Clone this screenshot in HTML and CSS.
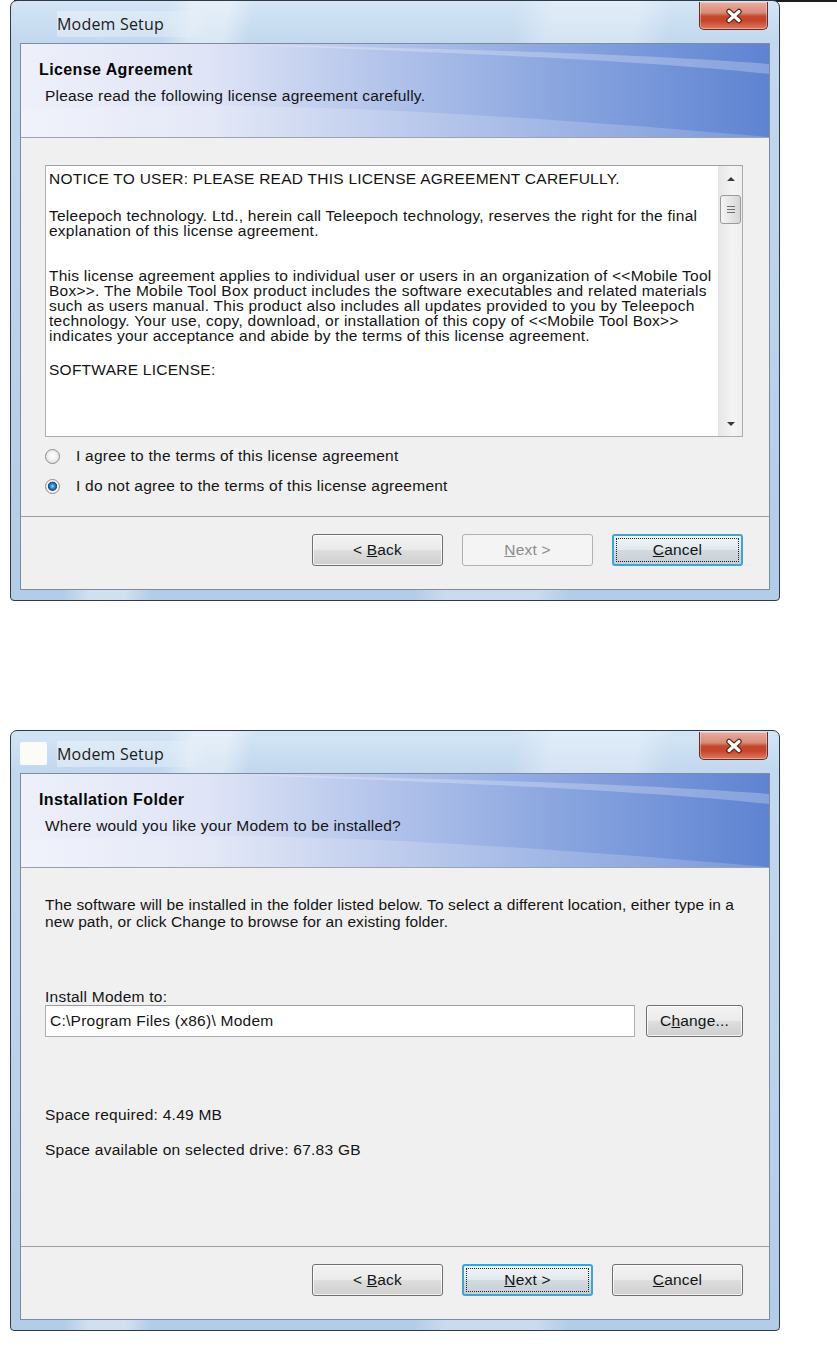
FILE: index.html
```html
<!DOCTYPE html>
<html lang="en">
<head>
  <meta charset="UTF-8" />
  <meta name="viewport" content="width=device-width, initial-scale=1" />
  <title>Modem Setup</title>
  <link rel="stylesheet" href="styles.css">
</head>
<body>
  <div class="rule"></div>

  <!-- step 1: license -->
  <div class="window">
    <div class="titlebar">
      <span class="title">Modem Setup</span>
      <span class="close">
        <svg width="20" height="16" viewBox="0 0 20 16">
          <path d="M5 3.5 L15 12.5 M15 3.5 L5 12.5" stroke="#5a2015" stroke-width="5.5" stroke-linecap="round" fill="none"/>
          <path d="M5 3.5 L15 12.5 M15 3.5 L5 12.5" stroke="#ffffff" stroke-width="3.2" stroke-linecap="round" fill="none"/>
        </svg>
      </span>
    </div>
    <div class="client">
      <div class="banner">
        <svg class="banner-bg" viewBox="0 0 750 93" preserveAspectRatio="none">
          <defs>
            <linearGradient id="bannerA" x1="0" y1="0" x2="1" y2="0">
              <stop offset="0" stop-color="#eef0fa"/>
              <stop offset="0.25" stop-color="#dfe4f6"/>
              <stop offset="0.45" stop-color="#b9c8ec"/>
              <stop offset="0.7" stop-color="#8da8e0"/>
              <stop offset="1" stop-color="#5e83d2"/>
            </linearGradient>
          </defs>
          <rect width="750" height="93" fill="url(#bannerA)"/>
          <path d="M200 0 C420 4 620 10 750 20 L750 30 C620 16 420 8 200 0 Z" fill="#ffffff" fill-opacity="0.25"/>
          <path d="M0 66 C220 54 460 68 750 93 L0 93 Z" fill="#ffffff" fill-opacity="0.18"/>
        </svg>
        <div class="banner-text">
          <h1>License Agreement</h1>
          <p>Please read the following license agreement carefully.</p>
        </div>
      </div>

      <div class="body license-body">
        <div class="licbox">
          <div class="lictext">
            <p>NOTICE TO USER: PLEASE READ THIS LICENSE AGREEMENT CAREFULLY.</p>
            <p>Teleepoch technology. Ltd., herein call Teleepoch technology, reserves the right for the final<br>explanation of this license agreement.</p>
            <p>This license agreement applies to individual user or users in an organization of &lt;&lt;Mobile Tool<br>Box&gt;&gt;. The Mobile Tool Box product includes the software executables and related materials<br>such as users manual. This product also includes all updates provided to you by Teleepoch<br>technology. Your use, copy, download, or installation of this copy of &lt;&lt;Mobile Tool Box&gt;&gt;<br>indicates your acceptance and abide by the terms of this license agreement.</p>
            <p>SOFTWARE LICENSE:</p>
          </div>
          <div class="scrollbar">
            <span class="sb-btn"><span class="arrow up"></span></span>
            <span class="sb-thumb"><span class="grip"></span></span>
            <span class="sb-track"></span>
            <span class="sb-btn"><span class="arrow down"></span></span>
          </div>
        </div>
        <div class="radio-row"><span class="radio"></span><span>I agree to the terms of this license agreement</span></div>
        <div class="radio-row"><span class="radio checked"></span><span>I do not agree to the terms of this license agreement</span></div>
      </div>

      <div class="footer">
        <span class="btn"><span>&lt; <u>B</u>ack</span></span>
        <span class="btn disabled"><span><u>N</u>ext &gt;</span></span>
        <span class="btn focus"><span class="focus-ring"><span><u>C</u>ancel</span></span></span>
      </div>
    </div>
  </div>

  <!-- step 2: folder -->
  <div class="window second">
    <div class="titlebar">
      <span class="app-icon"></span>
      <span class="title">Modem Setup</span>
      <span class="close">
        <svg width="20" height="16" viewBox="0 0 20 16">
          <path d="M5 3.5 L15 12.5 M15 3.5 L5 12.5" stroke="#5a2015" stroke-width="5.5" stroke-linecap="round" fill="none"/>
          <path d="M5 3.5 L15 12.5 M15 3.5 L5 12.5" stroke="#ffffff" stroke-width="3.2" stroke-linecap="round" fill="none"/>
        </svg>
      </span>
    </div>
    <div class="client">
      <div class="banner">
        <svg class="banner-bg" viewBox="0 0 750 93" preserveAspectRatio="none">
          <defs>
            <linearGradient id="bannerB" x1="0" y1="0" x2="1" y2="0">
              <stop offset="0" stop-color="#eef0fa"/>
              <stop offset="0.25" stop-color="#dfe4f6"/>
              <stop offset="0.45" stop-color="#b9c8ec"/>
              <stop offset="0.7" stop-color="#8da8e0"/>
              <stop offset="1" stop-color="#5e83d2"/>
            </linearGradient>
          </defs>
          <rect width="750" height="93" fill="url(#bannerB)"/>
          <path d="M200 0 C420 4 620 10 750 20 L750 30 C620 16 420 8 200 0 Z" fill="#ffffff" fill-opacity="0.25"/>
          <path d="M0 66 C220 54 460 68 750 93 L0 93 Z" fill="#ffffff" fill-opacity="0.18"/>
        </svg>
        <div class="banner-text">
          <h1>Installation Folder</h1>
          <p>Where would you like your Modem to be installed?</p>
        </div>
      </div>

      <div class="body install-body">
        <p class="intro">The software will be installed in the folder listed below. To select a different location, either type in a<br>new path, or click Change to browse for an existing folder.</p>
        <p class="field-label">Install Modem to:</p>
        <div class="path-row">
          <div class="path-input">C:\Program Files (x86)\ Modem</div>
          <span class="btn change"><span>C<u>h</u>ange...</span></span>
        </div>
        <p class="space first">Space required: 4.49 MB</p>
        <p class="space">Space available on selected drive: 67.83 GB</p>
      </div>

      <div class="footer">
        <span class="btn"><span>&lt; <u>B</u>ack</span></span>
        <span class="btn focus"><span class="focus-ring"><span><u>N</u>ext &gt;</span></span></span>
        <span class="btn"><span><u>C</u>ancel</span></span>
      </div>
    </div>
  </div>
</body>
</html>
```

FILE: styles.css
```css
* {
  box-sizing: border-box;
}
body {
  margin: 0;
  background: #ffffff;
  font-family: "Liberation Sans", Arial, sans-serif;
  color: #141414;
}
.rule {
  height: 2px;
  margin-left: 14px;
  background: #1c1c1c;
}

/* aero frame */
.window {
  width: 770px;
  height: 601px;
  margin-left: 10px;
  margin-top: -2px;
  padding: 0 9px 10px;
  border: 1px solid #2f3a48;
  border-radius: 7px 7px 4px 4px;
  display: flex;
  flex-direction: column;
  background:
    linear-gradient(100deg, rgba(255,255,255,0) 0 18%, rgba(255,255,255,.4) 21% 25%, rgba(255,255,255,0) 28% 58%, rgba(255,255,255,.3) 62% 72%, rgba(255,255,255,0) 76%),
    linear-gradient(180deg, #d4e5f5 0, #c2d8ee 40px, #b3cce7 100%);
}
.window.second {
  margin-top: 129px;
}
.titlebar {
  height: 42px;
  display: flex;
  align-items: flex-start;
  flex-shrink: 0;
}
.title {
  margin-top: 10px;
  margin-left: 37px;
  padding: 2px 46px 2px 0;
  font-family: "Open Sans", "Noto Sans", sans-serif;
  font-size: 16px;
  letter-spacing: 0.2px;
  color: #1b1b1b;
  background: linear-gradient(90deg, rgba(255,255,255,.35), rgba(255,255,255,.25) 70%, rgba(255,255,255,0));
}
.app-icon {
  width: 27px;
  height: 23px;
  margin-top: 11px;
  background: #fbfbf8;
  border-radius: 2px;
}
.second .title {
  margin-left: 10px;
}
.close {
  margin-left: auto;
  margin-right: 2px;
  margin-top: 1px;
  width: 69px;
  height: 28px;
  border: 1px solid #6b2b20;
  border-top: none;
  border-radius: 0 0 5px 5px;
  display: flex;
  align-items: center;
  justify-content: center;
  background: linear-gradient(180deg, #e8ad9f 0, #d88a78 40%, #c24a2f 52%, #c6452b 70%, #dc7a62 100%);
  box-shadow: inset 0 0 0 1px rgba(255,255,255,.35);
}

.client {
  flex: 1;
  display: flex;
  flex-direction: column;
  border: 1px solid #7c8b9f;
  background: #f0f0f0;
}

/* header band */
.banner {
  height: 94px;
  flex-shrink: 0;
  display: grid;
  border-bottom: 1px solid #9ba3b0;
}
.banner-bg,
.banner-text {
  grid-area: 1 / 1;
}
.banner-bg {
  width: 100%;
  height: 93px;
  display: block;
}
.banner-text {
  padding: 17px 0 0 18px;
}
.banner h1 {
  margin: 0;
  font-size: 16px;
  line-height: 18px;
  letter-spacing: 0.4px;
  font-weight: bold;
  color: #050505;
}
.banner p {
  margin: 8px 0 0 6px;
  font-size: 15.5px;
  line-height: 18px;
  letter-spacing: 0.2px;
  color: #141414;
}

.body {
  flex: 1;
  font-size: 15.5px;
  letter-spacing: 0.25px;
}

/* license page */
.license-body {
  padding: 27px 26px 0 24px;
}
.licbox {
  height: 272px;
  display: flex;
  border: 1px solid #abadb3;
  border-top-color: #9ea1a8;
  background: #ffffff;
}
.lictext {
  flex: 1;
  padding: 5px 0 0 3px;
  line-height: 15px;
  white-space: nowrap;
  overflow: hidden;
}
.lictext p {
  margin: 0 0 22px;
}
.lictext p:nth-child(2) {
  margin-bottom: 30px;
}
.lictext p:nth-child(3) {
  margin-bottom: 19px;
}
.scrollbar {
  width: 24px;
  display: flex;
  flex-direction: column;
  background: linear-gradient(90deg, #e7e7e7, #f4f4f4 60%, #eeeeee);
  border-left: 1px solid #e4e4e4;
}
.sb-btn {
  height: 25px;
  display: flex;
  align-items: center;
  justify-content: center;
}
.arrow {
  width: 0;
  height: 0;
  border-left: 4px solid transparent;
  border-right: 4px solid transparent;
}
.arrow.up {
  border-bottom: 4px solid #3a3a3a;
}
.arrow.down {
  border-top: 4px solid #3a3a3a;
}
.sb-thumb {
  height: 29px;
  margin: 4px 1px 0;
  border: 1px solid #9a9a9a;
  border-radius: 3px;
  background: linear-gradient(90deg, #f4f4f4, #e6e6e6 50%, #d6d6d6);
  display: flex;
  align-items: center;
  justify-content: center;
}
.grip {
  width: 8px;
  height: 7px;
  border-top: 1px solid #707070;
  border-bottom: 1px solid #707070;
  background: linear-gradient(#707070, #707070) center / 8px 1px no-repeat;
}
.sb-track {
  flex: 1;
}
.radio-row {
  height: 22px;
  display: flex;
  align-items: center;
  gap: 16px;
  margin-top: 8px;
}
.radio {
  width: 15px;
  height: 15px;
  border-radius: 50%;
  border: 1px solid #8d8d8d;
  background: radial-gradient(circle at 50% 45%, #ffffff 0, #f1f1f1 45%, #d0d0d0 100%);
}
.radio.checked {
  background: radial-gradient(circle at 50% 48%, #a6defb 0, #3d9de0 1.6px, #1c5b9c 3.6px, #274e7a 4.3px, #e6e6e6 4.9px, #fafafa 5.6px, #d0d0d0 100%);
}

/* folder page */
.install-body {
  padding: 28px 26px 0 24px;
}
.install-body p {
  margin: 0;
  line-height: 17px;
  white-space: nowrap;
}
.install-body .intro {
  letter-spacing: 0.1px;
}
.field-label {
  margin-top: 58px !important;
}
.path-row {
  display: flex;
  gap: 11px;
}
.path-input {
  width: 590px;
  height: 32px;
  padding: 0 4px;
  display: flex;
  align-items: center;
  background: #ffffff;
  border: 1px solid #abadb3;
  border-top-color: #9a9da5;
}
.space.first {
  margin-top: 69px !important;
}
.space + .space {
  margin-top: 18px !important;
}

/* footer buttons */
.footer {
  height: 73px;
  flex-shrink: 0;
  border-top: 1px solid #a0a0a0;
  padding: 17px 26px 0 0;
  display: flex;
  justify-content: flex-end;
  gap: 19px;
}
.btn {
  width: 131px;
  height: 32px;
  display: flex;
  align-items: center;
  justify-content: center;
  border: 1px solid #707070;
  border-radius: 3px;
  background: linear-gradient(180deg, #f3f3f3 0, #ebebeb 48%, #dddddd 52%, #cfcfcf 100%);
  box-shadow: inset 0 0 0 1px rgba(255,255,255,.75);
  font-size: 15.5px;
  letter-spacing: 0.2px;
  color: #141414;
  white-space: pre;
}
.btn.disabled {
  border-color: #adb2b5;
  background: #f4f4f4;
  box-shadow: none;
  color: #8b8b8b;
}
.btn.focus {
  border: 2px solid #3aa6d6;
  box-shadow: none;
  padding: 2px;
  background: linear-gradient(180deg, #eef5f9 0, #e3eaee 48%, #d2dadf 52%, #c7cfd4 100%);
}
.focus-ring {
  width: 100%;
  height: 100%;
  display: flex;
  align-items: center;
  justify-content: center;
  border: 1px dotted #222222;
}
.btn.change {
  width: 97px;
}
```
